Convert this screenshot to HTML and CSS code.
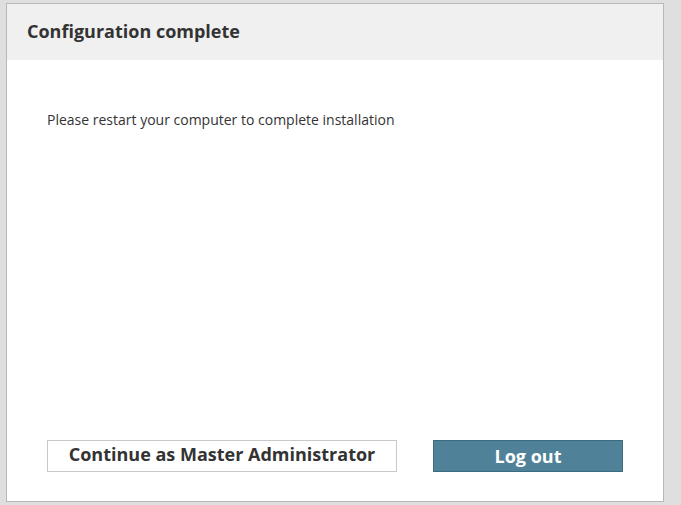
FILE: index.html
```html
<!DOCTYPE html>
<html>
<head>
<meta charset="utf-8">
<link rel="stylesheet" href="styles.css">
</head>
<body>
<div class="panel">
  <div class="panel-header"><h1 class="title">Configuration complete</h1></div>
  <div class="panel-body">
    <p class="message">Please restart your computer to complete installation</p>
    <div class="actions">
      <button class="btn btn-secondary">Continue as Master Administrator</button>
      <button class="btn btn-primary">Log out</button>
    </div>
  </div>
</div>
</body>
</html>
```
FILE: styles.css
```css
html, body {
  margin: 0;
  padding: 0;
  background: #dfdfdf;
  font-family: "Open Sans", "Noto Sans", sans-serif;
  color: #333;
}
.panel {
  margin: 3px 0 0 6px;
  width: 656px;
  height: 497px;
  border: 1px solid #b8b8b8;
  background: #fff;
  display: flex;
  flex-direction: column;
}
.panel-header {
  height: 56px;
  background: #f0f0f0;
  display: flex;
  align-items: center;
  padding: 0 20px 2px 20px;
  box-sizing: border-box;
}
.title {
  margin: 0;
  font-size: 18px;
  font-weight: 700;
  color: #333;
}
.panel-body {
  flex: 1;
  display: flex;
  flex-direction: column;
  padding: 50px 40px 29px 40px;
}
.message {
  margin: 0;
  font-size: 14px;
  color: #333;
}
.actions {
  margin-top: auto;
  display: flex;
  justify-content: space-between;
}
.btn {
  height: 32px;
  font-family: "Open Sans", "Noto Sans", sans-serif;
  font-weight: 700;
  font-size: 18px;
  padding: 0;
  cursor: pointer;
}
.btn-secondary {
  width: 350px;
  background: #fff;
  border: 1px solid #c8c8c8;
  color: #333;
  padding-bottom: 5px;
}
.btn-primary {
  width: 190px;
  background: #4f8299;
  border: 1px solid #3f6b80;
  color: #fff;
  padding-top: 0;
}
```
